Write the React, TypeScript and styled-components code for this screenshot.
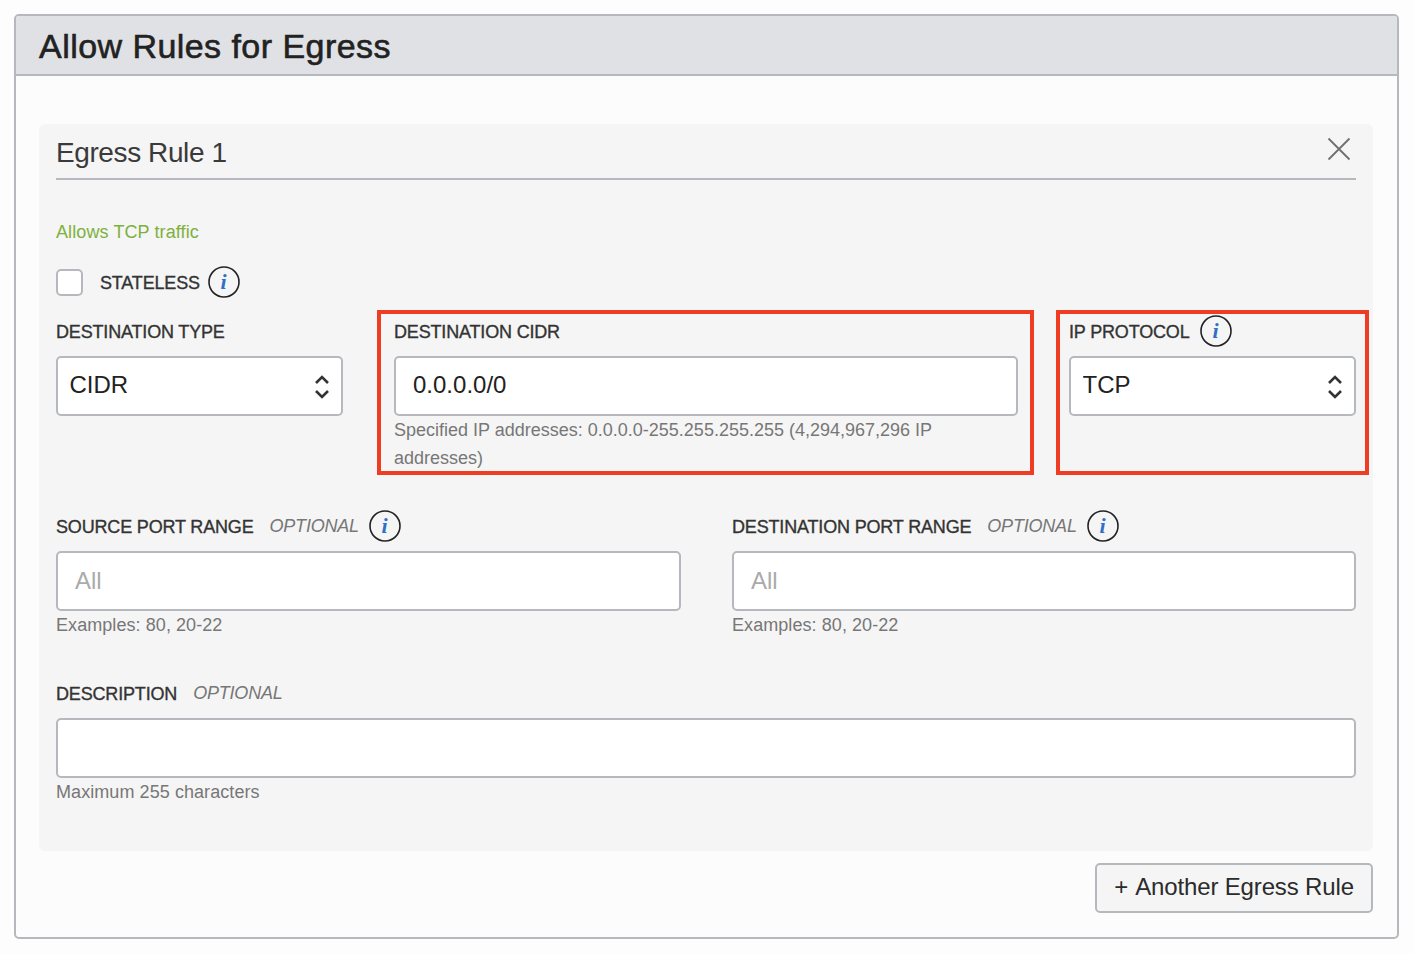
import React from "react";
import styled, { createGlobalStyle } from "styled-components";

const Global = createGlobalStyle`
  html, body { margin: 0; padding: 0; background: #fdfdfd; }
  body { font-family: "Liberation Sans", Arial, sans-serif; color: #333; }
  * { box-sizing: border-box; }
`;

const Page = styled.div`
  width: 1414px;
  height: 954px;
  padding: 14px 15px 15px 14px;
`;

const Panel = styled.section`
  border: 2px solid #b5b9be;
  border-radius: 5px;
  background: #fcfcfc;
  overflow: hidden;
`;

const PanelHeader = styled.header`
  height: 60px;
  padding: 2px 23px 0;
  display: flex;
  align-items: center;
  background: #e0e1e5;
  border-bottom: 2px solid #b5b9be;
`;

const PanelTitle = styled.h1`
  margin: 0;
  font-size: 34px;
  font-weight: 400;
  letter-spacing: 0.45px;
  color: #222;
  -webkit-text-stroke: 0.6px #222;
`;

const PanelBody = styled.div`
  padding: 48px 24px 24px 23px;
  display: flex;
  flex-direction: column;
  align-items: flex-end;
`;

const Card = styled.div`
  width: 100%;
  padding: 0 17px 45px;
  background: #f5f5f5;
  border-radius: 6px;
`;

const CardHeading = styled.div`
  height: 56px;
  padding: 4px 6px 0 0;
  display: flex;
  align-items: center;
  justify-content: space-between;
  border-bottom: 2px solid #b5b9be;
`;

const CardTitle = styled.h2`
  margin: 0;
  font-size: 28px;
  font-weight: 400;
  letter-spacing: -0.4px;
  color: #3a3a3a;
`;

const CloseButton = styled.button`
  width: 24px;
  height: 24px;
  margin: -8px -1px 0 0;
  padding: 0;
  border: 0;
  background: none;
  color: #6f6f6f;
  display: flex;
`;

const Status = styled.p`
  margin: 40px 0 0;
  font-size: 18px;
  line-height: 24px;
  letter-spacing: 0.1px;
  color: #7db13c;
`;

const CheckRow = styled.div`
  margin-top: 22px;
  height: 32px;
  display: flex;
  align-items: center;
`;

const Check = styled.span`
  width: 27px;
  height: 27px;
  margin-right: 17px;
  background: #fff;
  border: 2px solid #b5b9be;
  border-radius: 5px;
`;

const FieldGrid = styled.div<{ $cols: string; $top: number }>`
  display: grid;
  grid-template-columns: ${(p) => p.$cols};
  column-gap: 51px;
  margin-top: ${(p) => p.$top}px;
`;

const Field = styled.div`
  position: relative;
  min-width: 0;
`;

const LabelRow = styled.div`
  height: 32px;
  margin-bottom: 9px;
  display: flex;
  align-items: center;
`;

const Label = styled.label`
  padding-top: 2px;
  font-size: 18px;
  line-height: 32px;
  letter-spacing: -0.17px;
  color: #333;
  -webkit-text-stroke: 0.35px #333;
  white-space: nowrap;
`;

const Optional = styled.span`
  margin-left: 16px;
  font-size: 18px;
  font-style: italic;
  letter-spacing: -0.2px;
  color: #777;
  white-space: nowrap;
`;

const InfoWrap = styled.span<{ $gap: number }>`
  margin-left: ${(p) => p.$gap}px;
  display: flex;
`;

const Input = styled.input`
  display: block;
  width: 100%;
  height: 60px;
  padding: 0 17px 2px;
  background: #fff;
  border: 2px solid #b5b9be;
  border-radius: 5px;
  font: 24px "Liberation Sans", Arial, sans-serif;
  color: #222;
  outline: none;
  &::placeholder { color: #aaa; opacity: 1; }
  &:placeholder-shown { padding-bottom: 0; }
`;

const SelectWrap = styled.div`
  position: relative;
`;

const Select = styled.select`
  display: block;
  width: 100%;
  height: 60px;
  padding: 0 40px 4px 11.5px;
  appearance: none;
  background: #fff;
  border: 2px solid #b5b9be;
  border-radius: 5px;
  font: 24px "Liberation Sans", Arial, sans-serif;
  color: #222;
`;

const Chevrons = styled.svg`
  position: absolute;
  top: 17px;
  right: 13.5px;
  pointer-events: none;
`;

const Help = styled.p<{ $flush?: boolean }>`
  margin: 0;
  max-width: 590px;
  font-size: 18px;
  line-height: 28px;
  letter-spacing: ${(p) => (p.$flush ? 0 : 0.07)}px;
  color: #777;
`;

const Highlight = styled.span`
  position: absolute;
  inset: -5px -16px -3px -17px;
  border: 4px solid #ee3d23;
  pointer-events: none;
`;

const HighlightNarrow = styled(Highlight)`
  inset: -5px -13px -3px -13px;
`;

const AddButton = styled.button`
  margin-top: 12px;
  width: 278px;
  height: 50px;
  padding: 0 0 2px;
  background: #f5f5f5;
  border: 2px solid #b5b9be;
  border-radius: 5px;
  font: 24px "Liberation Sans", Arial, sans-serif;
  letter-spacing: -0.15px;
  color: #2b2b2b;
`;

const Plus = styled.span`
  margin-right: 2px;
`;

const InfoGlyph = styled.text`
  font-family: "Liberation Serif", serif;
  font-style: italic;
  font-weight: 700;
  font-size: 22px;
  fill: #2f6fc6;
`;

const Info = ({ gap = 10 }: { gap?: number }) => (
  <InfoWrap $gap={gap}>
    <svg width="32" height="32" viewBox="0 0 32 32" aria-hidden="true">
      <circle cx="16" cy="16" r="15" fill="none" stroke="#222" strokeWidth="1.6" />
      <InfoGlyph x="15.5" y="23" textAnchor="middle">i</InfoGlyph>
    </svg>
  </InfoWrap>
);

const UpDown = () => (
  <Chevrons width="16" height="26" viewBox="0 0 16 26" aria-hidden="true">
    <path d="M2 10 L8 4 L14 10 M2 18 L8 24 L14 18" fill="none" stroke="#333" strokeWidth="2.6" />
  </Chevrons>
);

export default function App() {
  return (
    <Page>
      <Global />
      <Panel>
        <PanelHeader>
          <PanelTitle>Allow Rules for Egress</PanelTitle>
        </PanelHeader>
        <PanelBody>
          <Card>
            <CardHeading>
              <CardTitle>Egress Rule 1</CardTitle>
              <CloseButton aria-label="Remove rule">
                <svg width="24" height="24" viewBox="0 0 24 24" aria-hidden="true">
                  <path d="M1.5 1.5 L22.5 22.5 M22.5 1.5 L1.5 22.5" stroke="currentColor" strokeWidth="1.8" fill="none" />
                </svg>
              </CloseButton>
            </CardHeading>
            <Status>Allows TCP traffic</Status>
            <CheckRow>
              <Check />
              <Label>STATELESS</Label>
              <Info gap={8} />
            </CheckRow>
            <FieldGrid $cols="287px 624px 287px" $top={17}>
              <Field>
                <LabelRow><Label>DESTINATION TYPE</Label></LabelRow>
                <SelectWrap>
                  <Select defaultValue="CIDR"><option>CIDR</option></Select>
                  <UpDown />
                </SelectWrap>
              </Field>
              <Field>
                <LabelRow><Label>DESTINATION CIDR</Label></LabelRow>
                <Input defaultValue="0.0.0.0/0" />
                <Help $flush>Specified IP addresses: 0.0.0.0-255.255.255.255 (4,294,967,296 IP addresses)</Help>
                <Highlight />
              </Field>
              <Field>
                <LabelRow><Label>IP PROTOCOL</Label><Info /></LabelRow>
                <SelectWrap>
                  <Select defaultValue="TCP"><option>TCP</option></Select>
                  <UpDown />
                </SelectWrap>
                <HighlightNarrow />
              </Field>
            </FieldGrid>
            <FieldGrid $cols="625px 624px" $top={38}>
              <Field>
                <LabelRow>
                  <Label>SOURCE PORT RANGE</Label>
                  <Optional>OPTIONAL</Optional>
                  <Info />
                </LabelRow>
                <Input placeholder="All" />
                <Help>Examples: 80, 20-22</Help>
              </Field>
              <Field>
                <LabelRow>
                  <Label>DESTINATION PORT RANGE</Label>
                  <Optional>OPTIONAL</Optional>
                  <Info />
                </LabelRow>
                <Input placeholder="All" />
                <Help>Examples: 80, 20-22</Help>
              </Field>
            </FieldGrid>
            <FieldGrid $cols="1300px" $top={38}>
              <Field>
                <LabelRow>
                  <Label>DESCRIPTION</Label>
                  <Optional>OPTIONAL</Optional>
                </LabelRow>
                <Input />
                <Help>Maximum 255 characters</Help>
              </Field>
            </FieldGrid>
          </Card>
          <AddButton><Plus>+</Plus> Another Egress Rule</AddButton>
        </PanelBody>
      </Panel>
    </Page>
  );
}
